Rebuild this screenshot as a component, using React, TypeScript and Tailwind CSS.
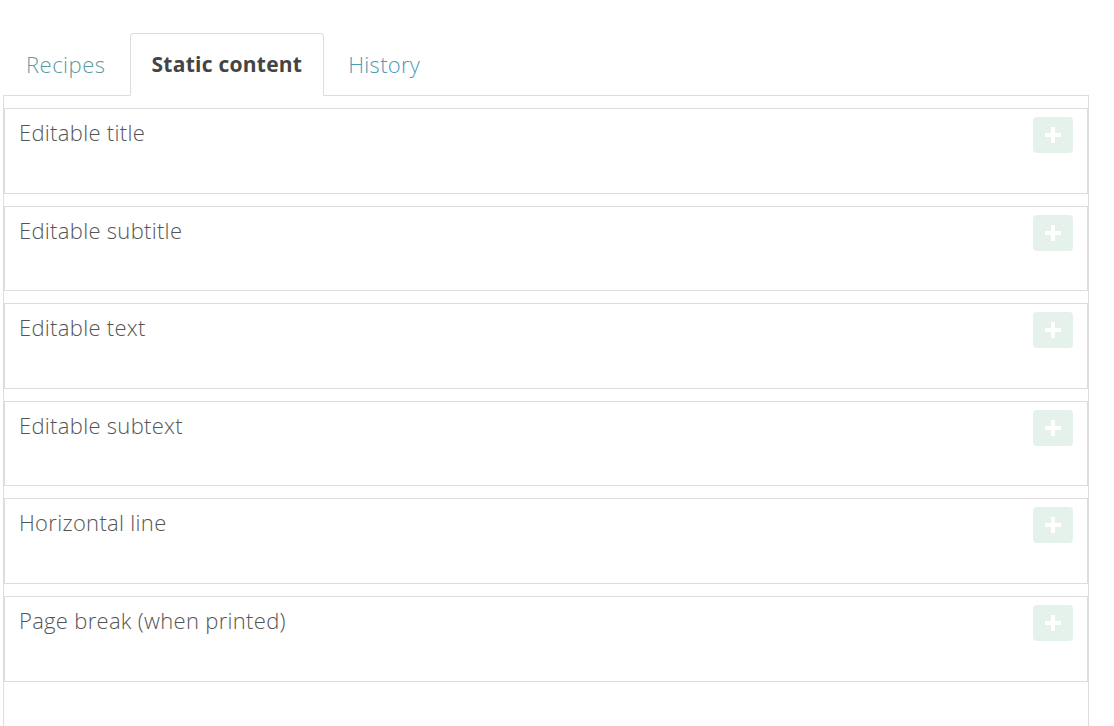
import React from "react";

const items = [
  "Editable title",
  "Editable subtitle",
  "Editable text",
  "Editable subtext",
  "Horizontal line",
  "Page break (when printed)",
];

function PlusButton() {
  return (
    <div className="w-[40px] h-[36px] rounded-[4px] bg-[#e5f2eb] flex items-center justify-center shrink-0">
      <svg width="16" height="16" viewBox="0 0 16 16">
        <rect x="6" y="0" width="4" height="16" fill="#fff" />
        <rect x="0" y="6" width="16" height="4" fill="#fff" />
      </svg>
    </div>
  );
}

export default function App() {
  return (
    <div
      className="w-[1114px] h-[726px] overflow-hidden bg-white pt-[33px]"
      style={{ fontFamily: "'Open Sans', Lato, sans-serif" }}
    >
      <div className="flex pl-[4px] relative z-10">
        <div className="h-[62px] px-[21px] flex items-center text-[22px] tracking-[0.5px] font-light text-[#5a9aa2] border border-transparent mr-[2px]">
          Recipes
        </div>
        <div className="h-[63px] -mb-px px-[21px] flex items-center text-[21px] tracking-[0.25px] font-bold text-[#444] bg-white border border-[#ddd] border-b-white rounded-t-[4px] mr-[2px]">
          Static content
        </div>
        <div className="h-[62px] px-[21px] flex items-center text-[22px] tracking-[0.3px] font-light text-[#4a9ab8] border border-transparent">
          History
        </div>
      </div>
      <div className="ml-[3px] w-[1086px] h-[700px] border border-[#ddd] pt-[12px]">
        {items.map((t) => (
          <div
            key={t}
            className="h-[85.6px] mb-[12px] border border-[#ddd] flex items-start justify-between pl-[14px] pr-[14px] pt-[8px]"
          >
            <div className="text-[22px] tracking-[0.3px] font-light text-[#555] leading-[30px]">{t}</div>
            <PlusButton />
          </div>
        ))}
      </div>
    </div>
  );
}
